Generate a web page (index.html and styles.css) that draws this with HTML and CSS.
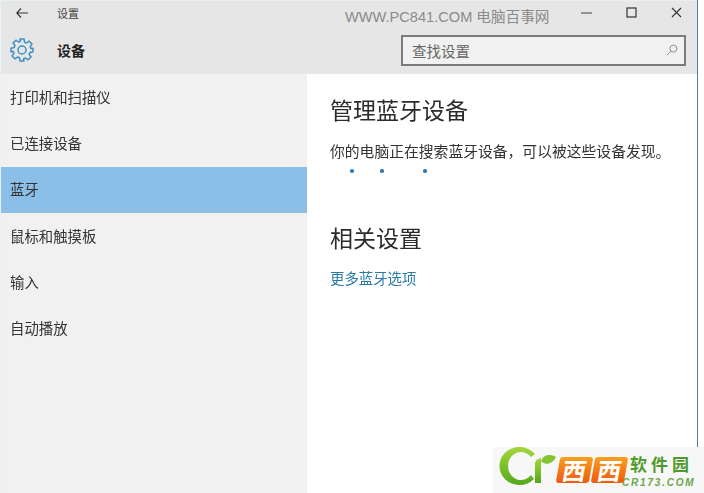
FILE: index.html
```html
<!DOCTYPE html>
<html lang="zh-CN">

<head>
    <meta charset="UTF-8">
    <title>设置</title>
    <link rel="stylesheet" href="styles.css">
</head>

<body>
    <div class="window">
        <header class="top">
            <div class="titlebar">
                <svg class="back" width="12" height="10" viewBox="0 0 12 10">
                    <path d="M5 .5 .8 5 5 9.500M.8 5H12" fill="none" stroke="#333" stroke-width="1.100" />
                </svg>
                <span class="app-name">设置</span>
                <span class="site">WWW.PC841.COM 电脑百事网</span>
                <div class="controls">
                    <svg width="11" height="11" viewBox="0 0 11 11">
                        <path d="M0 6H11" stroke="#444" stroke-width="1" />
                    </svg>
                    <svg width="11" height="11" viewBox="0 0 11 11">
                        <rect x="1" y="1" width="9" height="9" fill="none" stroke="#333" stroke-width="1.200" />
                    </svg>
                    <svg width="11" height="11" viewBox="0 0 11 11">
                        <path d="M1 1 10 10M10 1 1 10" stroke="#333" stroke-width="1.100" />
                    </svg>
                </div>
            </div>
            <div class="headbar">
                <svg class="gear" width="24" height="24" viewBox="0 0 24 24">
                    <path d="M10 1h4l.6 3.200 1.900.8 2.700-1.800 2.800 2.800-1.800 2.700.8 1.900L23 10.200v3.600l-3 .6-.8 1.900 1.800 2.700-2.800 2.800-2.700-1.800-1.900.8L13.900 23h-3.800l-.6-3.200-1.900-.8-2.700 1.800-2.800-2.800 1.800-2.700-.8-1.900L1 13.800v-3.600l3.100-.6.8-1.900-1.800-2.700 2.800-2.800 2.700 1.800 1.900-.8z" fill="none" stroke="#3f8fc6" stroke-width="1.500" stroke-linejoin="round" />
                    <circle cx="12" cy="12" r="4" fill="none" stroke="#3f8fc6" stroke-width="1.500" />
                </svg>
                <span class="head-title">设备</span>
                <div class="search">
                    <span>查找设置</span>
                    <svg width="12" height="12" viewBox="0 0 13 13">
                        <circle cx="8" cy="5" r="3.800" fill="none" stroke="#888" />
                        <path d="M5.200 7.800 1 12" stroke="#888" />
                    </svg>
                </div>
            </div>
        </header>
        <div class="main">
            <aside class="side">
                <a class="item">打印机和扫描仪</a>
                <a class="item">已连接设备</a>
                <a class="item active">蓝牙</a>
                <a class="item">鼠标和触摸板</a>
                <a class="item">输入</a>
                <a class="item">自动播放</a>
            </aside>
            <section class="content">
                <h2>管理蓝牙设备</h2>
                <p class="status">你的电脑正在搜索蓝牙设备，可以被这些设备发现。</p>
                <div class="dots"><i></i><i></i><i></i></div>
                <h2 class="related">相关设置</h2>
                <a class="more">更多蓝牙选项</a>
            </section>
        </div>
    </div>
    <div class="logo">
        <svg width="58" height="40" viewBox="0 0 58 40">
            <defs>
                <linearGradient id="green" x1="0" y1="0" x2="0" y2="1">
                    <stop offset="0" stop-color="#a5d63c" />
                    <stop offset="1" stop-color="#55a81a" />
                </linearGradient>
            </defs>
            <path d="M37 7A20 19 0 1 0 36 32L33 28A13 14 0 1 1 33 10Z" fill="url(#green)" />
            <path d="M37 36V17Q37 12 43 11V36Z" fill="url(#green)" />
            <path d="M43 14C46 7 53 7 58 10 55 17 47 19 43 14Z" fill="#86c431" />
        </svg>
        <div class="logo-cn"><b>西</b><b>西</b></div>
        <div class="logo-right">
            <span class="logo-name">软件园</span>
            <span class="logo-url">CR173.COM</span>
        </div>
    </div>
</body>

</html>
```

FILE: styles.css
```css
* {
    padding: 0;
    margin: 0;
    box-sizing: border-box;
}

body {
    background: #fff;
    width: 704px;
    height: 493px;
    overflow: hidden;
    position: relative;
    font-family: "Noto Sans CJK SC", "Liberation Sans", sans-serif;
}

.window {
    width: 698px;
    height: 493px;
    border-left: 1px solid #e6f3fb;
    border-right: 1px solid #4f8298;
    display: flex;
    flex-direction: column;
    filter: blur(0.3px);
}

.top {
    background: #e6e6e6;
    height: 74px;
    border-top: 1px solid #e6f0f5;
}

.titlebar {
    height: 23px;
    display: flex;
    align-items: center;
    padding: 0 15px;
}

.app-name {
    font-size: 11px;
    color: #444;
    margin-left: 29px;
}

.site {
    font-family: "Liberation Sans", "Noto Sans CJK SC", sans-serif;
    font-size: 14.600px;
    color: #8a8a8a;
    margin: 5px 0 0 266px;
    white-space: nowrap;
}

.controls {
    display: flex;
    align-items: center;
    gap: 34px;
    margin-left: auto;
}

.headbar {
    height: 50px;
    display: flex;
    align-items: center;
    padding: 2px 11px 0 9px;
}

.head-title {
    font-size: 14px;
    font-weight: bold;
    color: #222;
    margin-left: 23px;
}

.search {
    margin-left: auto;
    width: 285px;
    height: 31px;
    border: 2px solid #7b7b7b;
    background: #f1f1f1;
    display: flex;
    align-items: center;
    justify-content: space-between;
    padding: 0 6px 0 9px;
    font-size: 14.500px;
    color: #666;
}

.main {
    flex: 1;
    display: flex;
}

.side {
    width: 306px;
    background: #f1f1f1;
}

.item {
    display: flex;
    align-items: center;
    height: 46.300px;
    padding: 0 0 2px 9px;
    font-size: 14.400px;
    color: #333;
}

.item.active {
    background: #8cbfe8;
}

.content {
    flex: 1;
    padding: 19px 0 0 23px;
}

h2 {
    font-size: 23px;
    font-weight: normal;
    line-height: 32px;
    color: #2b2b2b;
}

.status {
    font-size: 14.800px;
    line-height: 20px;
    color: #333;
    margin-top: 16px;
    white-space: nowrap;
}

.dots {
    display: flex;
    margin: 8px 0 0 20px;
}

.dots i {
    width: 3.500px;
    height: 3.500px;
    border-radius: 50%;
    background: #2f7ab5;
    margin-right: 26.500px;
}

.dots i:nth-child(2) {
    margin-right: 39.500px;
}

.related {
    margin-top: 48px;
}

.more {
    display: block;
    font-size: 14.400px;
    line-height: 20px;
    color: #2a7ba8;
    margin-top: 15px;
}

.logo {
    position: absolute;
    left: 493px;
    top: 447px;
    width: 211px;
    height: 46px;
    background: #f7f7f7;
    display: flex;
    align-items: flex-start;
    padding-left: 5px;
}

.logo-cn {
    display: flex;
    gap: 2px;
    margin: 10px 0 0 2px;
}

.logo-cn b {
    width: 33px;
    height: 26px;
    background: linear-gradient(#f9a01f, #ee5a12);
    color: #fff;
    font-size: 24px;
    line-height: 26px;
    text-align: center;
    transform: skewX(-10deg);
    border-radius: 3px;
}

.logo-right {
    display: flex;
    flex-direction: column;
    margin: 7px 0 0 -4px;
}

.logo-name {
    font-size: 17px;
    line-height: 20px;
    letter-spacing: 4px;
    margin-left: 8px;
    font-weight: bold;
    color: #4f9a2c;
    white-space: nowrap;
}

.logo-url {
    font-family: "Liberation Sans", sans-serif;
    font-size: 10px;
    line-height: 11px;
    letter-spacing: 1.800px;
    margin-top: 3px;
    font-weight: bold;
    font-style: italic;
    color: #6aa84a;
    white-space: nowrap;
}
```
